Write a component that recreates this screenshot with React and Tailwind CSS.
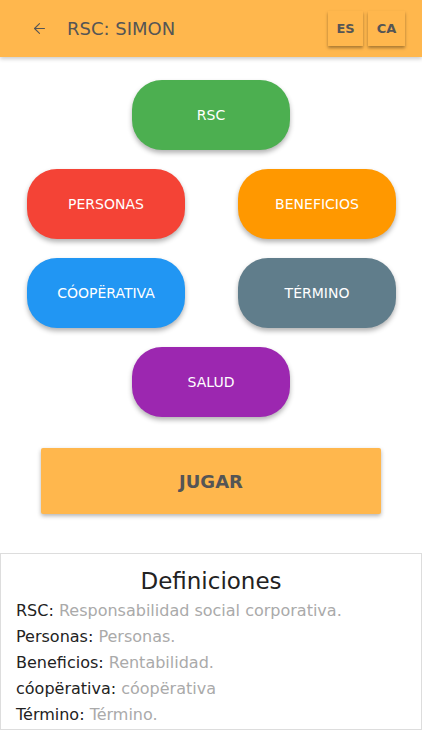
import { ArrowLeft } from 'lucide-react'

const font = { fontFamily: '"DejaVu Sans", sans-serif' }

function Pill({ label, color }) {
  return (
    <button
      className={`w-[158px] h-[70px] rounded-[30px] text-white text-[14px] shadow-[0_3px_5px_rgba(0,0,0,0.3)] ${color}`}
    >
      {label}
    </button>
  )
}

export default function App() {
  return (
    <div className="w-[422px] h-[750px] bg-white overflow-hidden" style={font}>
      <div className="h-[730px] overflow-hidden flex flex-col">
        {/* Header */}
        <div className="h-[57px] shrink-0 bg-[#ffb74d] flex items-center pl-[31px] pr-[17px] shadow-[0_2px_4px_rgba(0,0,0,0.2)] relative z-10">
          <ArrowLeft className="w-[17px] h-[17px] text-[#555]" strokeWidth={1.5} />
          <h1 className="ml-[19px] text-[18px] text-[#555]">RSC: SIMON</h1>
          <div className="ml-auto flex gap-[5px]">
            <button className="w-[35px] h-[35px] bg-[#ffb74d] text-[#555] text-[13px] font-bold shadow-[0_2px_3px_rgba(0,0,0,0.35)]">
              ES
            </button>
            <button className="w-[37px] h-[35px] bg-[#ffb74d] text-[#555] text-[13px] font-bold shadow-[0_2px_3px_rgba(0,0,0,0.35)]">
              CA
            </button>
          </div>
        </div>

        {/* Buttons */}
        <div className="pt-[23px] flex flex-col gap-[19px]">
          <div className="flex justify-center">
            <Pill label="RSC" color="bg-[#4caf50]" />
          </div>
          <div className="flex justify-between pl-[27px] pr-[26px]">
            <Pill label="PERSONAS" color="bg-[#f44336]" />
            <Pill label="BENEFICIOS" color="bg-[#ff9800]" />
          </div>
          <div className="flex justify-between pl-[27px] pr-[26px]">
            <Pill label="CÓOPËRATIVA" color="bg-[#2196f3]" />
            <Pill label="TÉRMINO" color="bg-[#607d8b]" />
          </div>
          <div className="flex justify-center">
            <Pill label="SALUD" color="bg-[#9c27b0]" />
          </div>
        </div>

        <div className="px-[41px] mt-[31px]">
          <button className="w-full h-[66px] bg-[#ffb74d] rounded-[2px] text-[#555] text-[18px] font-bold shadow-[0_2px_4px_rgba(0,0,0,0.3)]">
            JUGAR
          </button>
        </div>

        {/* Definitions */}
        <div className="mt-[39px] border border-[#ddd] flex-1 px-[15px]">
          <h2 className="text-center text-[23px] text-[#222] pt-[12px] leading-[30px]">Definiciones</h2>
          <div className="text-[16px] leading-[26px] mt-[2px]">
            <p><span className="text-[#222]">RSC:</span> <span className="text-[#aaa]">Responsabilidad social corporativa.</span></p>
            <p><span className="text-[#222]">Personas:</span> <span className="text-[#aaa]">Personas.</span></p>
            <p><span className="text-[#222]">Beneficios:</span> <span className="text-[#aaa]">Rentabilidad.</span></p>
            <p><span className="text-[#222]">cóopërativa:</span> <span className="text-[#aaa]">cóopërativa</span></p>
            <p><span className="text-[#222]">Término:</span> <span className="text-[#aaa]">Término.</span></p>
          </div>
        </div>
      </div>
    </div>
  )
}
